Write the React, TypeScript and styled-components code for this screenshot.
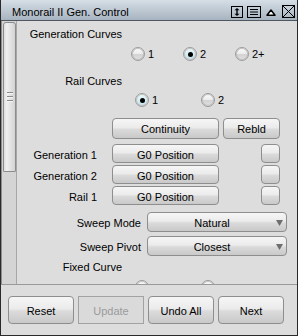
import React from 'react';
import styled, { createGlobalStyle } from 'styled-components';

const Global = createGlobalStyle`
  html, body { margin: 0; padding: 0; background: #dddddd; }
  body { font-family: "Liberation Sans", Arial, sans-serif; font-size: 11px; color: #000; }
  * { box-sizing: border-box; }
`;

const Window = styled.div`
  width: 298px;
  height: 336px;
  border: 1px solid #2a2a2a;
  border-top: none;
  display: flex;
  flex-direction: column;
  background: #dddddd;
  overflow: hidden;
`;

const TitleBar = styled.div`
  height: 21px;
  flex: none;
  display: flex;
  align-items: flex-start;
  padding: 0 2px 0 11px;
  background: linear-gradient(to bottom, #d6dee6 0%, #bcc7d1 55%, #a7b3bf 100%);
  border-bottom: 1px solid #4f5760;
`;

const Title = styled.div`
  flex: 1;
  margin-top: 6px;
  line-height: 13px;
  white-space: nowrap;
`;

const TitleIcon = styled.svg<{ $top: number; $gap: number }>`
  display: block;
  flex: none;
  margin-top: ${(p) => p.$top}px;
  margin-left: ${(p) => p.$gap}px;
`;

const Body = styled.div`
  height: 264px;
  flex: none;
  display: flex;
  border-bottom: 1px solid #9a9a9a;
`;

const ScrollTrack = styled.div`
  width: 16px;
  flex: none;
  background: #d4d4d4;
  border-left: 1px solid #8e8e8e;
  border-right: 1px solid #a6a6a6;
  padding: 1px 0 0 1px;
`;

const ScrollThumb = styled.div`
  width: 13px;
  height: 150px;
  border: 1px solid #8c8c8c;
  border-radius: 3px 3px 1px 1px;
  background: linear-gradient(to right, #dedede 0%, #f0f0f0 25%, #e2e2e2 60%, #d2d2d2 100%);
  display: flex;
  flex-direction: column;
  align-items: center;
  justify-content: center;
  gap: 2px;
`;

const Grip = styled.div`
  width: 6px;
  height: 2px;
  border-top: 1px solid #8a8a8a;
  border-bottom: 1px solid #f4f4f4;
`;

const Content = styled.div`
  width: 280px;
  flex: none;
  display: flex;
  flex-direction: column;
  overflow: hidden;
`;

const Heading = styled.div<{ $mt: number }>`
  width: 105px;
  flex: none;
  text-align: right;
  line-height: 13px;
  margin-top: ${(p) => p.$mt}px;
  white-space: nowrap;
`;

const RadioRow = styled.div<{ $mt: number; $pl: number }>`
  display: flex;
  flex: none;
  height: 14px;
  margin-top: ${(p) => p.$mt}px;
  padding-left: ${(p) => p.$pl}px;
`;

const RadioItem = styled.div<{ $w: number }>`
  width: ${(p) => p.$w}px;
  flex: none;
  display: flex;
  align-items: center;
  gap: 3px;
  line-height: 13px;
`;

const RadioCircle = styled.div<{ $on?: boolean }>`
  width: 14px;
  height: 14px;
  flex: none;
  border-radius: 50%;
  border: 1px solid #9c9c9c;
  box-shadow: inset 0 0 0 1px #c4c4c4;
  background: ${(p) =>
    p.$on
      ? 'linear-gradient(to bottom, #eef9fb 0%, #d6eef3 50%, #c4e2ea 100%)'
      : 'linear-gradient(to bottom, #fbfbfb 0%, #ededed 45%, #d2d2d2 55%, #e2e2e2 100%)'};
  display: flex;
  align-items: center;
  justify-content: center;
`;

const Dot = styled.div`
  width: 5px;
  height: 5px;
  border-radius: 50%;
  background: #000;
`;

const Row = styled.div<{ $mt: number; $pl?: number }>`
  display: flex;
  flex: none;
  align-items: center;
  margin-top: ${(p) => p.$mt}px;
  padding-left: ${(p) => p.$pl ?? 0}px;
`;

const RowLabel = styled.div<{ $w: number; $gap: number; $pt?: number }>`
  width: ${(p) => p.$w}px;
  margin-right: ${(p) => p.$gap}px;
  padding-top: ${(p) => p.$pt ?? 0}px;
  flex: none;
  text-align: right;
  line-height: 13px;
  white-space: nowrap;
`;

const Button = styled.button<{ $w: number; $h: number; $pt?: number; $ml?: number; $off?: boolean }>`
  width: ${(p) => p.$w}px;
  height: ${(p) => p.$h}px;
  margin: 0 0 0 ${(p) => p.$ml ?? 0}px;
  padding: ${(p) => p.$pt ?? 0}px 0 0 0;
  flex: none;
  font: inherit;
  line-height: 13px;
  color: ${(p) => (p.$off ? '#9a9a9a' : '#000')};
  border: 1px solid ${(p) => (p.$off ? '#a2a2a2' : '#8e8e8e')};
  border-radius: ${(p) => (p.$off ? '0' : '4px')};
  background: ${(p) =>
    p.$off
      ? '#dadada'
      : 'linear-gradient(to bottom, #f6f6f6 0%, #ebebeb 45%, #dadada 55%, #c9c9c9 100%)'};
  display: flex;
  align-items: center;
  justify-content: center;
  white-space: nowrap;
`;

const Select = styled.div`
  width: 140px;
  height: 20px;
  flex: none;
  display: flex;
  align-items: center;
  padding: 2px 3px 0 0;
  border: 1px solid #8e8e8e;
  border-radius: 4px;
  background: linear-gradient(to bottom, #f6f6f6 0%, #ebebeb 45%, #dadada 55%, #c9c9c9 100%);
`;

const SelectText = styled.div`
  flex: 1;
  text-align: center;
  line-height: 13px;
`;

const Footer = styled.div`
  height: 50px;
  flex: none;
  display: flex;
  gap: 4px;
  padding: 11px 0 0 7px;
  background: #dddddd;
`;

function RadioOpt({ label, on, w }: { label?: string; on?: boolean; w: number }) {
  return (
    <RadioItem $w={w}>
      <RadioCircle $on={on}>{on && <Dot />}</RadioCircle>
      {label && <span>{label}</span>}
    </RadioItem>
  );
}

function Arrow() {
  return (
    <svg width="7" height="6" viewBox="0 0 7 6">
      <polygon points="0,0 7,0 3.5,6" fill="#6e6e6e" />
    </svg>
  );
}

export default function App() {
  return (
    <>
      <Global />
      <Window>
        <TitleBar>
          <Title>Monorail II Gen. Control</Title>
          <TitleIcon $top={6} $gap={0} width="12" height="12" viewBox="0 0 12 12">
            <rect x="0.5" y="0.5" width="11" height="11" fill="none" stroke="#000" />
            <line x1="6" y1="3" x2="6" y2="9" stroke="#000" strokeWidth="1.4" />
            <polygon points="3.5,4.2 6,2 8.5,4.2" fill="#000" />
            <polygon points="3.5,7.8 6,10 8.5,7.8" fill="#000" />
          </TitleIcon>
          <TitleIcon $top={6} $gap={4} width="14" height="12" viewBox="0 0 14 12">
            <rect x="0.5" y="0.5" width="13" height="11" fill="none" stroke="#000" />
            <line x1="3" y1="3.5" x2="11" y2="3.5" stroke="#000" />
            <line x1="3" y1="6" x2="11" y2="6" stroke="#000" />
            <line x1="3" y1="8.5" x2="11" y2="8.5" stroke="#000" />
          </TitleIcon>
          <TitleIcon $top={9} $gap={5} width="10" height="7" viewBox="0 0 10 7">
            <polygon points="1,6.2 5,1 9,6.2" fill="#fff" stroke="#000" strokeWidth="1.5" strokeLinejoin="round" />
          </TitleIcon>
          <TitleIcon $top={5} $gap={6} width="13" height="13" viewBox="0 0 13 13">
            <rect x="0.5" y="0.5" width="12" height="12" fill="none" stroke="#000" />
            <line x1="1" y1="1" x2="12" y2="12" stroke="#000" />
            <line x1="12" y1="1" x2="1" y2="12" stroke="#000" />
          </TitleIcon>
        </TitleBar>

        <Body>
          <ScrollTrack>
            <ScrollThumb>
              <Grip />
              <Grip />
              <Grip />
            </ScrollThumb>
          </ScrollTrack>
          <Content>
            <Heading $mt={7}>Generation Curves</Heading>
            <RadioRow $mt={6} $pl={114}>
              <RadioOpt label="1" w={52} />
              <RadioOpt label="2" w={52} on />
              <RadioOpt label="2+" w={52} />
            </RadioRow>

            <Heading $mt={14}>Rail Curves</Heading>
            <RadioRow $mt={5} $pl={118}>
              <RadioOpt label="1" w={66} on />
              <RadioOpt label="2" w={66} />
            </RadioRow>

            <Row $mt={11} $pl={95}>
              <Button $w={107} $h={21} $pt={1}>Continuity</Button>
              <Button $w={57} $h={21} $pt={1} $ml={4}>Rebld</Button>
            </Row>

            <Row $mt={5}>
              <RowLabel $w={80} $gap={15} $pt={3}>Generation 1</RowLabel>
              <Button $w={107} $h={19} $pt={3}>G0 Position</Button>
              <Button $w={19} $h={19} $ml={42} />
            </Row>
            <Row $mt={2}>
              <RowLabel $w={80} $gap={15} $pt={3}>Generation 2</RowLabel>
              <Button $w={107} $h={19} $pt={3}>G0 Position</Button>
              <Button $w={19} $h={19} $ml={42} />
            </Row>
            <Row $mt={2}>
              <RowLabel $w={80} $gap={15} $pt={3}>Rail 1</RowLabel>
              <Button $w={107} $h={19} $pt={3}>G0 Position</Button>
              <Button $w={19} $h={19} $ml={42} />
            </Row>

            <Row $mt={7}>
              <RowLabel $w={124} $gap={6} $pt={2}>Sweep Mode</RowLabel>
              <Select>
                <SelectText>Natural</SelectText>
                <Arrow />
              </Select>
            </Row>
            <Row $mt={4}>
              <RowLabel $w={124} $gap={6} $pt={2}>Sweep Pivot</RowLabel>
              <Select>
                <SelectText>Closest</SelectText>
                <Arrow />
              </Select>
            </Row>

            <Heading $mt={5}>Fixed Curve</Heading>
            <RadioRow $mt={6} $pl={118}>
              <RadioOpt w={66} />
              <RadioOpt w={66} />
            </RadioRow>
          </Content>
        </Body>

        <Footer>
          <Button $w={66} $h={28} $pt={3}>Reset</Button>
          <Button $w={66} $h={28} $pt={3} $off>Update</Button>
          <Button $w={66} $h={28} $pt={3}>Undo All</Button>
          <Button $w={66} $h={28} $pt={3}>Next</Button>
        </Footer>
      </Window>
    </>
  );
}
